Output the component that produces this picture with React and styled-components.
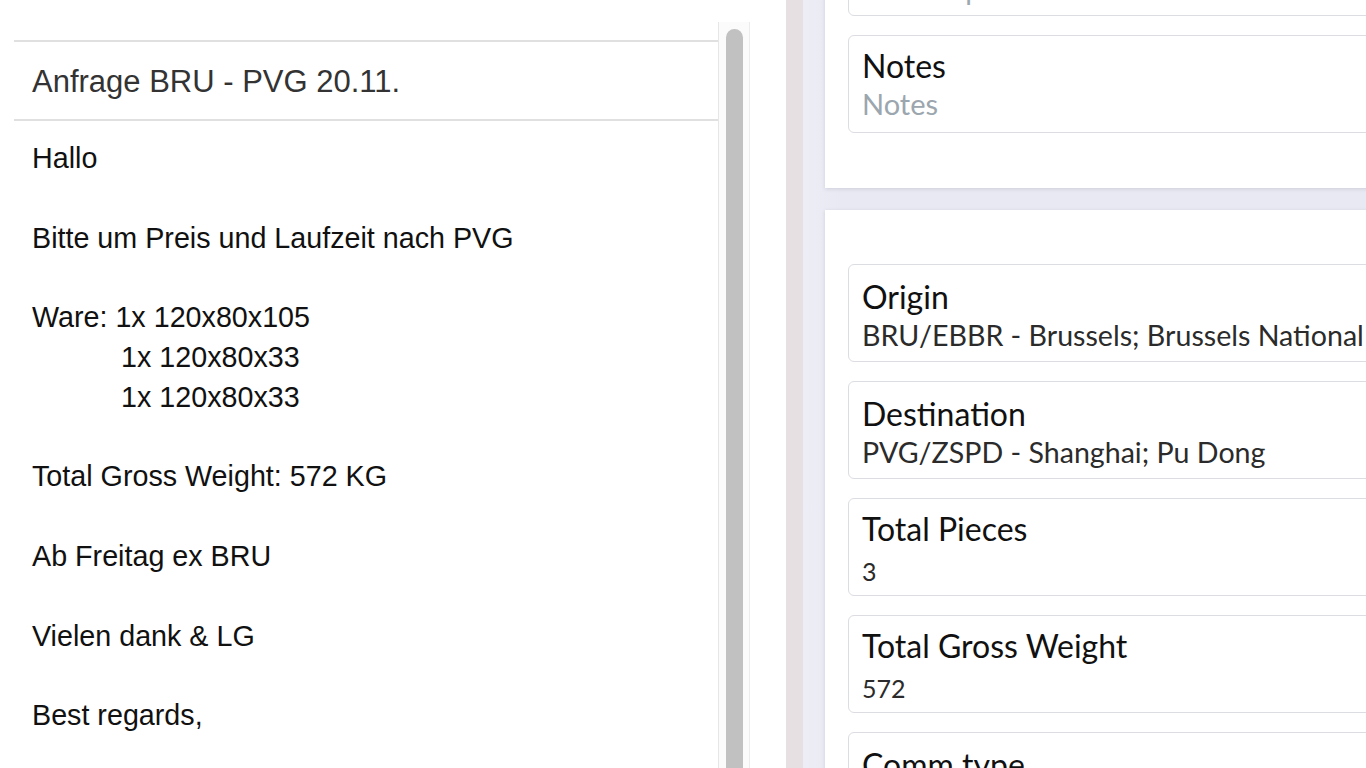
import React from "react";
import styled, { createGlobalStyle } from "styled-components";

const Global = createGlobalStyle`
  html, body { margin: 0; padding: 0; width: 1366px; height: 768px; overflow: hidden; background: #fff; }
  * { box-sizing: border-box; }
`;

const Page = styled.div`
  display: flex;
  width: 1366px;
  height: 768px;
  overflow: hidden;
`;

const LeftPane = styled.div`
  width: 786px;
  flex: none;
  background: #fff;
  padding: 22px 36px 0 14px;
  display: flex;
`;

const MailArea = styled.div`
  width: 704px;
  padding-top: 18px;
  font-family: "Liberation Sans", Arial, sans-serif;
`;

const MailHeader = styled.div`
  height: 81px;
  border-top: 2px solid #e0e0e0;
  border-bottom: 2px solid #e0e0e0;
  display: flex;
  align-items: center;
  padding: 3px 0 0 18px;
  font-size: 31px;
  color: #333;
`;

const MailBody = styled.div`
  padding: 18px 0 0 18px;
  font-size: 28.7px;
  line-height: 39.8px;
  color: #111;
`;

const Line = styled.div`
  height: 39.8px;
  padding-left: ${(p) => (p.$indent ? "89px" : "0")};
  white-space: pre;
`;

const ScrollTrack = styled.div`
  width: 32px;
  flex: none;
  border-left: 1px solid #e6e6e6;
  border-right: 1px solid #ececec;
  background: #fbfbfb;
  padding: 7px 0 0 7px;
`;

const Thumb = styled.div`
  width: 17px;
  height: 800px;
  background: #c1c1c1;
  border-radius: 9px;
`;

const Stripe = styled.div`
  width: 17px;
  flex: none;
  background: #e7e0e2;
`;

const RightArea = styled.div`
  flex: 1;
  background: linear-gradient(90deg, #ecedf5 0%, #e9e9f3 40px);
  padding-left: 22px;
  overflow: hidden;
  display: flex;
  flex-direction: column;
  gap: 22px;
`;

const Card = styled.div`
  width: 700px;
  background: #fff;
  box-shadow: 0 1px 4px rgba(60, 60, 100, 0.16);
  padding: 54px 0 ${(p) => p.$pb || 55}px 23px;
  margin-top: ${(p) => p.$mt || 0}px;
  display: flex;
  flex-direction: column;
  gap: 19px;
  flex: none;
`;

const Field = styled.div`
  width: 680px;
  height: 98px;
  border: 1.5px solid #dcdde3;
  border-radius: 6px;
  padding: 13px 0 0 13px;
  font-family: Lato, "Open Sans", sans-serif;
`;

const Label = styled.div`
  font-size: 32px;
  line-height: 38px;
  color: #111;
  margin-top: ${(p) => (p.$num ? "-2px" : "0")};
`;

const Value = styled.div`
  font-size: ${(p) => (p.$num ? "25px" : p.$placeholder ? "29px" : "28.6px")};
  line-height: 38px;
  margin-top: ${(p) => (p.$num ? "4px" : "0")};
  color: ${(p) => (p.$placeholder ? "#9ba6ae" : "#2b2b2b")};
`;

const mailLines = [
  { t: "Hallo" },
  { t: "" },
  { t: "Bitte um Preis und Laufzeit nach PVG" },
  { t: "" },
  { t: "Ware: 1x 120x80x105" },
  { t: "1x 120x80x33", indent: true },
  { t: "1x 120x80x33", indent: true },
  { t: "" },
  { t: "Total Gross Weight: 572 KG" },
  { t: "" },
  { t: "Ab Freitag ex BRU" },
  { t: "" },
  { t: "Vielen dank & LG" },
  { t: "" },
  { t: "Best regards," },
  { t: "" },
];

const fields = [
  { label: "Origin", value: "BRU/EBBR - Brussels; Brussels National" },
  { label: "Destination", value: "PVG/ZSPD - Shanghai; Pu Dong" },
  { label: "Total Pieces", value: "3", num: true },
  { label: "Total Gross Weight", value: "572", num: true },
  { label: "Comm type", value: "" },
];

export default function App() {
  return (
    <>
      <Global />
      <Page>
        <LeftPane>
          <MailArea>
            <MailHeader>Anfrage BRU - PVG 20.11.</MailHeader>
            <MailBody>
              {mailLines.map((l, i) => (
                <Line key={i} $indent={l.indent}>
                  {l.t}
                </Line>
              ))}
            </MailBody>
          </MailArea>
          <ScrollTrack>
            <Thumb />
          </ScrollTrack>
        </LeftPane>
        <Stripe />
        <RightArea>
          <Card $mt={-136}>
            <Field>
              <Label>Cool Temp</Label>
              <Value $placeholder>Cool Tmp</Value>
            </Field>
            <Field>
              <Label $num>Notes</Label>
              <Value $placeholder>Notes</Value>
            </Field>
          </Card>
          <Card $pb={40}>
            {fields.map((f) => (
              <Field key={f.label}>
                <Label $num={f.num}>{f.label}</Label>
                <Value $num={f.num}>{f.value}</Value>
              </Field>
            ))}
          </Card>
        </RightArea>
      </Page>
    </>
  );
}
